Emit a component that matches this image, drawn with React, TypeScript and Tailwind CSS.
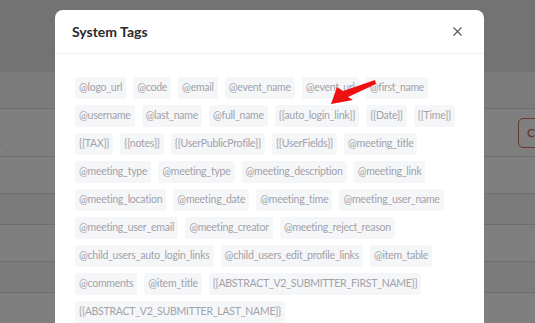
import { X } from 'lucide-react';

const tags = [
  '@logo_url',
  '@code',
  '@email',
  '@event_name',
  '@event_url',
  '@first_name',
  '@username',
  '@last_name',
  '@full_name',
  '{{auto_login_link}}',
  '{{Date}}',
  '{{Time}}',
  '{{TAX}}',
  '{{notes}}',
  '{{UserPublicProfile}}',
  '{{UserFields}}',
  '@meeting_title',
  '@meeting_type',
  '@meeting_type',
  '@meeting_description',
  '@meeting_link',
  '@meeting_location',
  '@meeting_date',
  '@meeting_time',
  '@meeting_user_name',
  '@meeting_user_email',
  '@meeting_creator',
  '@meeting_reject_reason',
  '@child_users_auto_login_links',
  '@child_users_edit_profile_links',
  '@item_table',
  '@comments',
  '@item_title',
  '{{ABSTRACT_V2_SUBMITTER_FIRST_NAME}}',
  '{{ABSTRACT_V2_SUBMITTER_LAST_NAME}}',
];

function Page() {
  return (
    <div className="flex flex-col">
      <div className="h-[72px] bg-[#e6e6e6]" />
      <div className="h-[37px] bg-[#f6f6f6] border-b border-[#dcdcdc]" />
      <div className="h-[48px] bg-white border-b border-[#dcdcdc] flex items-center justify-between">
        <span className="text-[12px] text-[#222] mt-[16px] -ml-[6px]">r.</span>
        <div className="w-[40px] h-[30px] -mr-[23px] border border-[#d3735d] rounded-[5px] flex items-center pl-[8px] text-[12px] text-[#c0604a]">
          C
        </div>
      </div>
      <div className="h-[37px] bg-white border-b border-[#dcdcdc]" />
      <div className="h-[31px] bg-[#f6f6f6] border-b border-[#dcdcdc]" />
      <div className="h-[37px] bg-white border-b border-[#dcdcdc]" />
      <div className="h-[31px] bg-[#f6f6f6] border-b border-[#dcdcdc]" />
      <div className="h-[40px] bg-white" />
    </div>
  );
}

export default function App() {
  return (
    <div
      className="relative w-[535px] h-[323px] overflow-hidden"
      style={{ fontFamily: 'Lato, "Noto Sans", sans-serif' }}
    >
      <Page />
      <div className="absolute inset-0 bg-black/50" />
      <div className="absolute left-[55px] top-[10px] w-[429px] h-[360px] bg-white rounded-[8px]">
        <div className="h-[44px] flex items-center justify-between pl-[17px] pr-[19px] border-b border-[#f0f0f2]">
          <h2 className="text-[14px] font-bold text-[#2a2a2a]">System Tags</h2>
          <X size={15} strokeWidth={1.8} className="text-[#555]" />
        </div>
        <div className="pt-[23px] px-[20px] flex flex-wrap gap-x-[7px] gap-y-[6px]">
          {tags.map((t, i) => (
            <span
              key={i}
              className="h-[22px] px-[4px] flex items-center rounded-[3px] bg-[#f5f6f8] text-[10.5px] tracking-[-0.25px] text-[#a2a2aa]"
            >
              {t}
            </span>
          ))}
        </div>
      </div>
      <svg
        className="absolute left-[325px] top-[78px]"
        width="56"
        height="30"
        viewBox="0 0 56 30"
      >
        <polygon
          points="6,26 12,9 18,13 50,2 51,6 23,19 28,22"
          fill="#ee1111"
        />
      </svg>
    </div>
  );
}
